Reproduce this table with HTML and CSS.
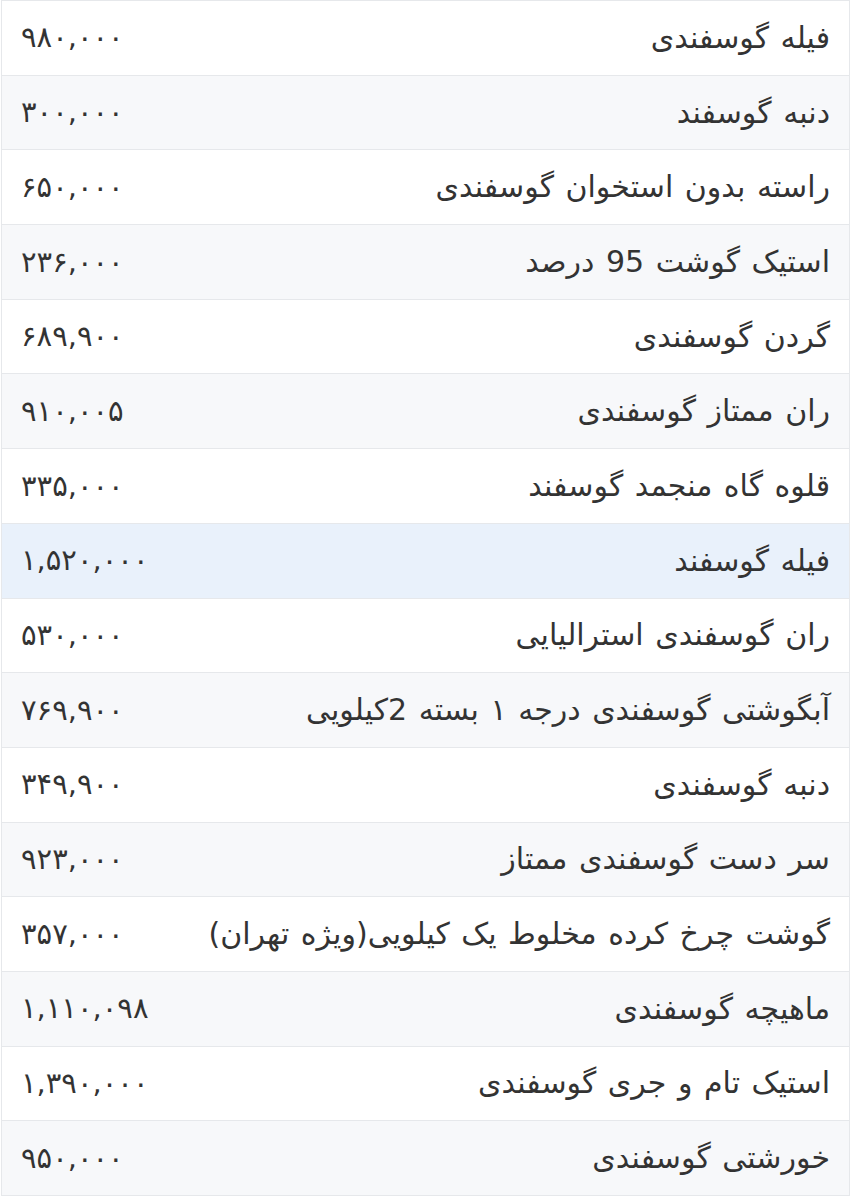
FILE: index.html
```html
<!DOCTYPE html>
<html lang="fa" dir="rtl">
<head>
<meta charset="utf-8">
<title>قیمت گوشت گوسفندی</title>
<link rel="stylesheet" href="styles.css">
</head>
<body>
<table class="prices">
<tbody>
<tr><td class="name">فیله گوسفندی</td><td class="price">۹۸۰,۰۰۰</td></tr>
<tr><td class="name">دنبه گوسفند</td><td class="price">۳۰۰,۰۰۰</td></tr>
<tr><td class="name">راسته بدون استخوان گوسفندی</td><td class="price">۶۵۰,۰۰۰</td></tr>
<tr><td class="name">استیک گوشت 95 درصد</td><td class="price">۲۳۶,۰۰۰</td></tr>
<tr><td class="name">گردن گوسفندی</td><td class="price">۶۸۹,۹۰۰</td></tr>
<tr><td class="name">ران ممتاز گوسفندی</td><td class="price">۹۱۰,۰۰۵</td></tr>
<tr><td class="name">قلوه گاه منجمد گوسفند</td><td class="price">۳۳۵,۰۰۰</td></tr>
<tr class="active"><td class="name">فیله گوسفند</td><td class="price">۱,۵۲۰,۰۰۰</td></tr>
<tr><td class="name">ران گوسفندی استرالیایی</td><td class="price">۵۳۰,۰۰۰</td></tr>
<tr><td class="name">آبگوشتی گوسفندی درجه ۱ بسته 2کیلویی</td><td class="price">۷۶۹,۹۰۰</td></tr>
<tr><td class="name">دنبه گوسفندی</td><td class="price">۳۴۹,۹۰۰</td></tr>
<tr><td class="name">سر دست گوسفندی ممتاز</td><td class="price">۹۲۳,۰۰۰</td></tr>
<tr><td class="name">گوشت چرخ کرده مخلوط یک کیلویی(ویژه تهران)</td><td class="price">۳۵۷,۰۰۰</td></tr>
<tr><td class="name">ماهیچه گوسفندی</td><td class="price">۱,۱۱۰,۰۹۸</td></tr>
<tr><td class="name">استیک تام و جری گوسفندی</td><td class="price">۱,۳۹۰,۰۰۰</td></tr>
<tr><td class="name">خورشتی گوسفندی</td><td class="price">۹۵۰,۰۰۰</td></tr>
</tbody>
</table>
</body>
</html>
```
FILE: styles.css
```css
html, body {
  margin: 0;
  padding: 0;
  background: #ffffff;
}

body {
  font-family: "DejaVu Sans", sans-serif;
  color: #333333;
}

.prices {
  width: 849px;
  border-collapse: collapse;
  border: 1px solid #e6e8eb;
  font-size: 29px;
}

.prices tr {
  height: 74.7px;
  background: #ffffff;
  border-bottom: 1px solid #e6e8eb;
}

.prices tr:nth-child(even) {
  background: #f7f8fa;
}

.prices tr.active {
  background: #e9f1fb;
}

.prices td {
  padding: 0 19px;
  vertical-align: middle;
  white-space: nowrap;
  line-height: 1.2;
}

.name {
  text-align: right;
  font-size: 30px;
  word-spacing: 2px;
}

.price {
  direction: ltr;
  text-align: left;
  width: 1%;
}
```
